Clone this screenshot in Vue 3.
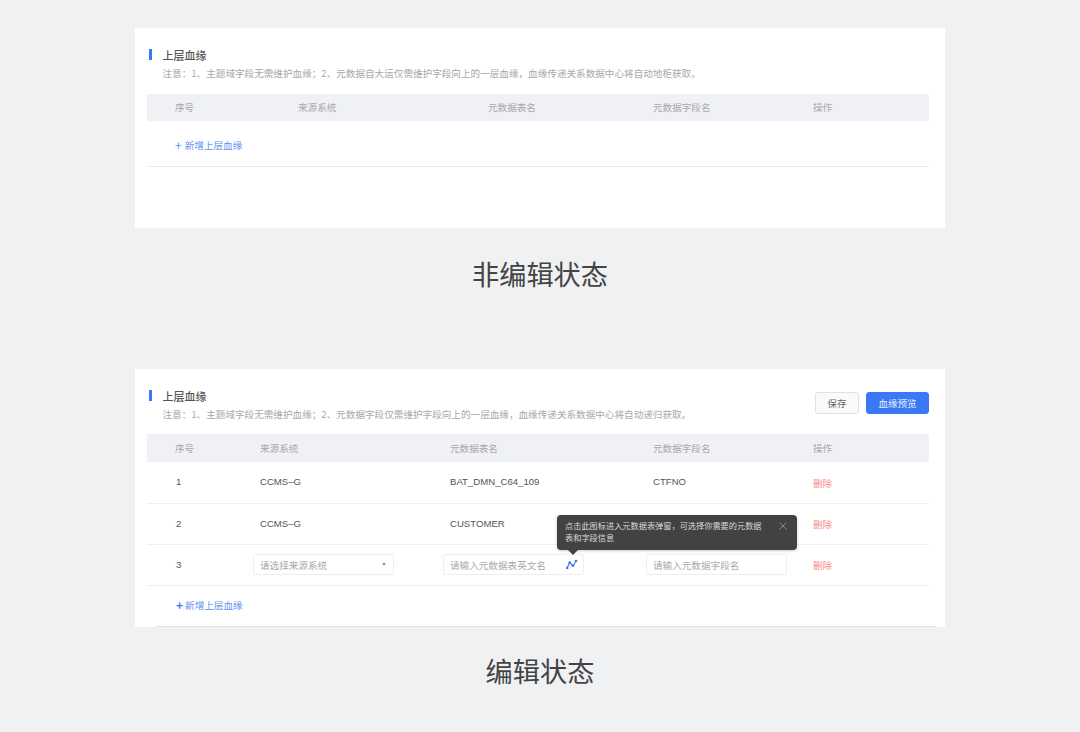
<script setup>
const note1 = '注意：1、主题域字段无需维护血缘；2、元数据自大运仅需维护字段向上的一层血缘，血缘传递关系数据中心将自动地柜获取。'
const note2 = '注意：1、主题域字段无需维护血缘；2、元数据字段仅需维护字段向上的一层血缘，血缘传递关系数据中心将自动递归获取。'
const heads = ['序号', '来源系统', '元数据表名', '元数据字段名', '操作']
const rows = [
  { n: 1, sys: 'CCMS–G', table: 'BAT_DMN_C64_109', field: 'CTFNO' },
  { n: 2, sys: 'CCMS–G', table: 'CUSTOMER', field: '' },
]
</script>

<template>
  <div class="page">
    <section class="card card-view">
      <div class="head">
        <div class="titles">
          <h2 class="title">上层血缘</h2>
          <p class="note">{{ note1 }}</p>
        </div>
      </div>
      <div class="table">
        <div class="row thead cols-view">
          <span v-for="h in heads" :key="h">{{ h }}</span>
        </div>
        <div class="add add-view"><span class="plus">+</span> 新增上层血缘</div>
      </div>
    </section>
    <div class="state state-one">非编辑状态</div>

    <section class="card card-edit">
      <div class="head">
        <div class="titles">
          <h2 class="title">上层血缘</h2>
          <p class="note">{{ note2 }}</p>
        </div>
        <div class="actions">
          <button class="btn">保存</button>
          <button class="btn primary">血缘预览</button>
        </div>
      </div>
      <div class="table">
        <div class="row thead thead-edit cols-edit">
          <span v-for="h in heads" :key="h">{{ h }}</span>
        </div>
        <div v-for="r in rows" :key="r.n" class="row body cols-edit">
          <span class="num">{{ r.n }}</span>
          <span>{{ r.sys }}</span>
          <span>{{ r.table }}</span>
          <span>{{ r.field }}</span>
          <span class="del">删除</span>
        </div>
        <div class="row body cols-edit input-row">
          <span class="num">3</span>
          <div class="field select">
            <span>请选择来源系统</span>
            <i class="caret"></i>
          </div>
          <div class="field table-field">
            <span>请输入元数据表英文名</span>
            <svg class="lineage" viewBox="0 0 12 12" width="12" height="12">
              <path d="M1 9 L3.7 3.6 L7 6.8 L10 2" fill="none" stroke="#3b78f5" stroke-width="1.2" />
              <circle cx="1.2" cy="9" r="1.3" fill="#3b78f5" />
              <circle cx="3.7" cy="3.6" r="1.3" fill="#3b78f5" />
              <circle cx="7" cy="6.8" r="1.3" fill="#3b78f5" />
              <circle cx="10" cy="2" r="1.3" fill="#3b78f5" />
            </svg>
            <div class="tip">
              <p>点击此图标进入元数据表弹窗，可选择你需要的元数据表和字段信息</p>
              <svg class="close" viewBox="0 0 8 8" width="8" height="8">
                <path d="M0.5 0.5 L7.5 7.5 M7.5 0.5 L0.5 7.5" stroke="#9a9a9a" stroke-width="0.8" fill="none" />
              </svg>
            </div>
          </div>
          <div class="field name-field"><span>请输入元数据字段名</span></div>
          <span class="del">删除</span>
        </div>
        <div class="add add-edit"><span class="plus strong">+</span>新增上层血缘</div>
      </div>
    </section>
    <div class="state state-two">编辑状态</div>
  </div>
</template>

<style>
html, body { margin: 0; background: #f0f1f3; }
</style>

<style scoped>
.page {
  width: 1080px;
  height: 732px;
  overflow: hidden;
  padding-top: 28px;
  box-sizing: border-box;
  background: #f0f1f3;
  display: flex;
  flex-direction: column;
  align-items: center;
  font-family: "Noto Sans CJK SC", "Liberation Sans", sans-serif;
}
.card {
  width: 810px;
  background: #fff;
  box-sizing: border-box;
  padding: 20px 16px 0 12px;
  flex: none;
}
.card-view { height: 200px; }
.card-edit { height: 258px; }
.head {
  display: flex;
  justify-content: space-between;
  height: 46px;
}
.card-edit .head { height: 45px; }
.titles { padding-left: 15.5px; position: relative; }
.titles::before {
  content: "";
  position: absolute;
  left: 2px;
  top: 1px;
  width: 3px;
  height: 11px;
  background: #3b78f5;
}
.title {
  margin: 0;
  font-size: 11px;
  line-height: 14px;
  font-weight: 500;
  color: #555;
}
.note {
  margin: 4px 0 0;
  font-size: 9.6px;
  line-height: 14px;
  color: #a8a8a8;
  white-space: nowrap;
}
.actions {
  display: flex;
  gap: 7px;
  margin-top: 3px;
  height: 22px;
}
.btn {
  width: 44px;
  height: 22px;
  box-sizing: border-box;
  border: 1px solid #dfe1e5;
  border-radius: 3px;
  background: #fafafa;
  color: #666;
  font: 9.5px/20px "Noto Sans CJK SC", sans-serif;
  padding: 0;
}
.primary {
  width: 63px;
  background: #3b78f5;
  border-color: #3b78f5;
  color: #e6eeff;
}
.table { width: 782px; font-size: 9.6px; color: #555; }
.row {
  display: grid;
  align-items: center;
  padding-left: 28px;
  box-sizing: border-box;
}
.cols-view { grid-template-columns: 123px 190px 165px 160px 1fr; }
.cols-edit { grid-template-columns: 85px 190px 203px 160px 1fr; }
.thead {
  height: 27px;
  padding-bottom: 2px;
  background: #f0f1f5;
  color: #a8a8a8;
  font-size: 9.6px;
  border-radius: 1px;
}
.thead-edit { height: 28px; padding-bottom: 1px; }
.thead-edit + .body { height: 42px; }
.body {
  height: 41px;
  padding-bottom: 2px;
  border-bottom: 1px solid #eeeff1;
  font-family: "Liberation Sans", "Noto Sans CJK SC", sans-serif;
  font-size: 9.6px;
  color: #555;
}
.num { padding-left: 1px; }
.del {
  padding-top: 2px;
  color: #f78e8e;
  font-family: "Noto Sans CJK SC", sans-serif;
}
.input-row { position: relative; }
.field {
  box-sizing: border-box;
  height: 21px;
  width: 141px;
  margin-top: 1px;
  border: 1px solid #eceef0;
  border-radius: 2px;
  margin-left: -7px;
  padding: 0 6px;
  display: flex;
  align-items: center;
  justify-content: space-between;
  color: #aaa;
  font-family: "Noto Sans CJK SC", sans-serif;
  font-size: 9.6px;
  position: relative;
}
.caret {
  width: 0;
  height: 0;
  border-left: 2.5px solid transparent;
  border-right: 2.5px solid transparent;
  border-top: 3px solid #999;
  margin-right: 1px;
}
.lineage { margin-right: -1px; }
.tip {
  position: absolute;
  left: 113px;
  top: -40px;
  width: 240px;
  height: 35px;
  box-sizing: border-box;
  padding: 4px 30px 0 8px;
  background: #424242;
  border-radius: 4px;
  color: #d8d8d8;
  font-size: 8.2px;
  line-height: 12px;
  box-shadow: 0 1px 3px rgba(0, 0, 0, .2);
  z-index: 2;
}
.tip p { margin: 0; }
.tip::after {
  content: "";
  position: absolute;
  left: 11px;
  bottom: -5px;
  width: 0;
  height: 0;
  border-left: 5px solid transparent;
  border-right: 5px solid transparent;
  border-top: 5px solid #424242;
}
.close { position: absolute; right: 10px; top: 7px; }
.add {
  color: #5f93f6;
  font-size: 9.6px;
  padding-left: 28px;
  display: flex;
  align-items: center;
}
.add-view {
  height: 46px;
  padding-top: 2px;
  border-bottom: 1px solid #eaebed;
  box-sizing: border-box;
}
.plus { margin-right: 3px; font-size: 12px; line-height: 12px; }
.strong { font-weight: 700; margin-right: 2px; color: #3b78f5; }
.add-edit {
  height: 41px;
  width: 782px;
  margin-left: 8px;
  padding: 0 0 2px 21px;
  box-sizing: border-box;
  border-bottom: 1px solid #e2e3e5;
}
.state {
  flex: none;
  color: #444;
  font-size: 27.2px;
  text-align: center;
  line-height: 40px;
}
.state-one { margin: 25px 0 76px; }
.state-two { margin-top: 23px; }
</style>
